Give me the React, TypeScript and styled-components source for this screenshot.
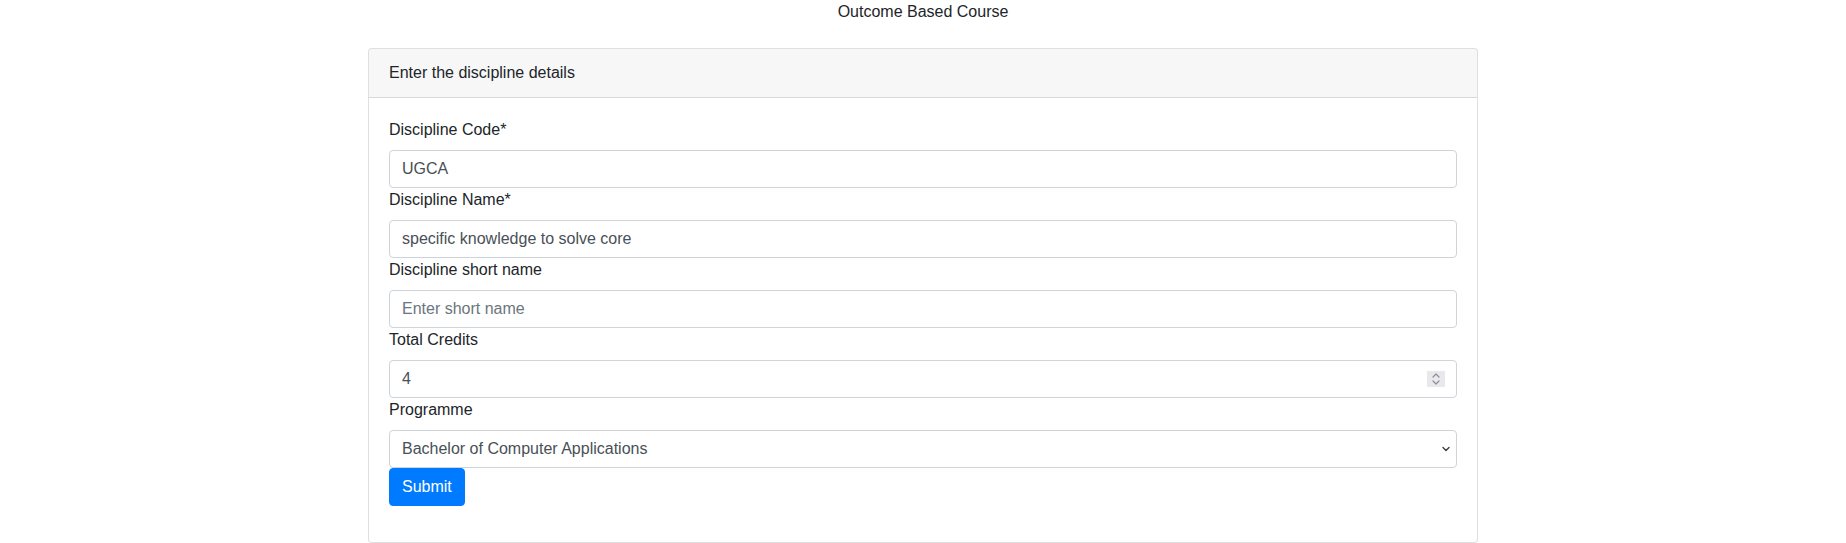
import React from "react";
import styled, { createGlobalStyle } from "styled-components";

const Global = createGlobalStyle`
  * { box-sizing: border-box; }
  body {
    margin: 0;
    font-family: "Liberation Sans", Arial, sans-serif;
    font-size: 16px;
    line-height: 1.5;
    color: #212529;
    background: #fff;
  }
`;

const Title = styled.div`
  text-align: center;
  line-height: 24px;
  height: 24px;
`;

const Card = styled.div`
  width: 1110px;
  margin: 24px auto 0;
  border: 1px solid rgba(0, 0, 0, 0.125);
  border-radius: 4px;
  background: #fff;
  display: flex;
  flex-direction: column;
`;

const CardHeader = styled.div`
  padding: 12px 20px;
  background: rgba(0, 0, 0, 0.03);
  border-bottom: 1px solid rgba(0, 0, 0, 0.125);
  line-height: 24px;
  border-radius: 3px 3px 0 0;
`;

const CardBody = styled.div`
  padding: 20px;
`;

const Form = styled.form`
  margin: 0 0 16px;
  display: flex;
  flex-direction: column;
  align-items: flex-start;
`;

const Label = styled.label`
  display: inline-block;
  margin-bottom: 8px;
  line-height: 24px;
`;

const Field = styled.div`
  position: relative;
  width: 100%;
`;

const Input = styled.input`
  display: block;
  width: 100%;
  height: 38px;
  padding: 6px 12px;
  font: inherit;
  font-size: 16px;
  line-height: 24px;
  color: #495057;
  background: #fff;
  border: 1px solid #ced4da;
  border-radius: 4px;
  outline: none;
  appearance: none;
  -moz-appearance: textfield;
  &::placeholder { color: #6c757d; opacity: 1; }
  &::-webkit-outer-spin-button,
  &::-webkit-inner-spin-button { -webkit-appearance: none; margin: 0; }
`;

const Select = styled.select`
  display: block;
  width: 100%;
  height: 38px;
  padding: 6px 12px;
  font: inherit;
  font-size: 16px;
  line-height: 24px;
  color: #495057;
  background: #fff;
  border: 1px solid #ced4da;
  border-radius: 4px;
  outline: none;
  appearance: none;
  -webkit-appearance: none;
`;

const Spinner = styled.div`
  position: absolute;
  right: 12px;
  top: 11px;
  width: 18px;
  height: 16px;
  background: #e9e9ed;
  display: flex;
  align-items: center;
  justify-content: center;
  pointer-events: none;
`;

const Chevron = styled.div`
  position: absolute;
  right: 7px;
  top: 16px;
  width: 8px;
  height: 6px;
  display: flex;
  pointer-events: none;
`;

const Button = styled.button`
  font: inherit;
  font-size: 16px;
  line-height: 24px;
  color: #fff;
  background: #007bff;
  border: 1px solid #007bff;
  border-radius: 4px;
  padding: 6px 12px;
  height: 38px;
  cursor: pointer;
`;

export default function App() {
  return (
    <>
      <Global />
      <Title>Outcome Based Course</Title>
      <Card>
        <CardHeader>Enter the discipline details</CardHeader>
        <CardBody>
          <Form onSubmit={(e) => e.preventDefault()}>
            <Label>Discipline Code*</Label>
            <Field>
              <Input type="text" defaultValue="UGCA" />
            </Field>
            <Label>Discipline Name*</Label>
            <Field>
              <Input type="text" defaultValue="specific knowledge to solve core" />
            </Field>
            <Label>Discipline short name</Label>
            <Field>
              <Input type="text" placeholder="Enter short name" />
            </Field>
            <Label>Total Credits</Label>
            <Field>
              <Input type="number" defaultValue={4} />
              <Spinner>
                <svg width="10" height="14" viewBox="0 0 10 14" fill="none" stroke="#8e8e93" strokeWidth="1.2" strokeLinecap="round" strokeLinejoin="round">
                  <path d="M2 5 L5 2 L8 5" />
                  <path d="M2 9 L5 12 L8 9" />
                </svg>
              </Spinner>
            </Field>
            <Label>Programme</Label>
            <Field>
              <Select defaultValue="bca">
                <option value="bca">Bachelor of Computer Applications</option>
              </Select>
              <Chevron>
                <svg width="8" height="6" viewBox="0 0 8 6" fill="none" stroke="#3c3c43" strokeWidth="1.4" strokeLinecap="round" strokeLinejoin="round">
                  <path d="M1 1.5 L4 4.5 L7 1.5" />
                </svg>
              </Chevron>
            </Field>
            <Button type="submit">Submit</Button>
          </Form>
        </CardBody>
      </Card>
    </>
  );
}
